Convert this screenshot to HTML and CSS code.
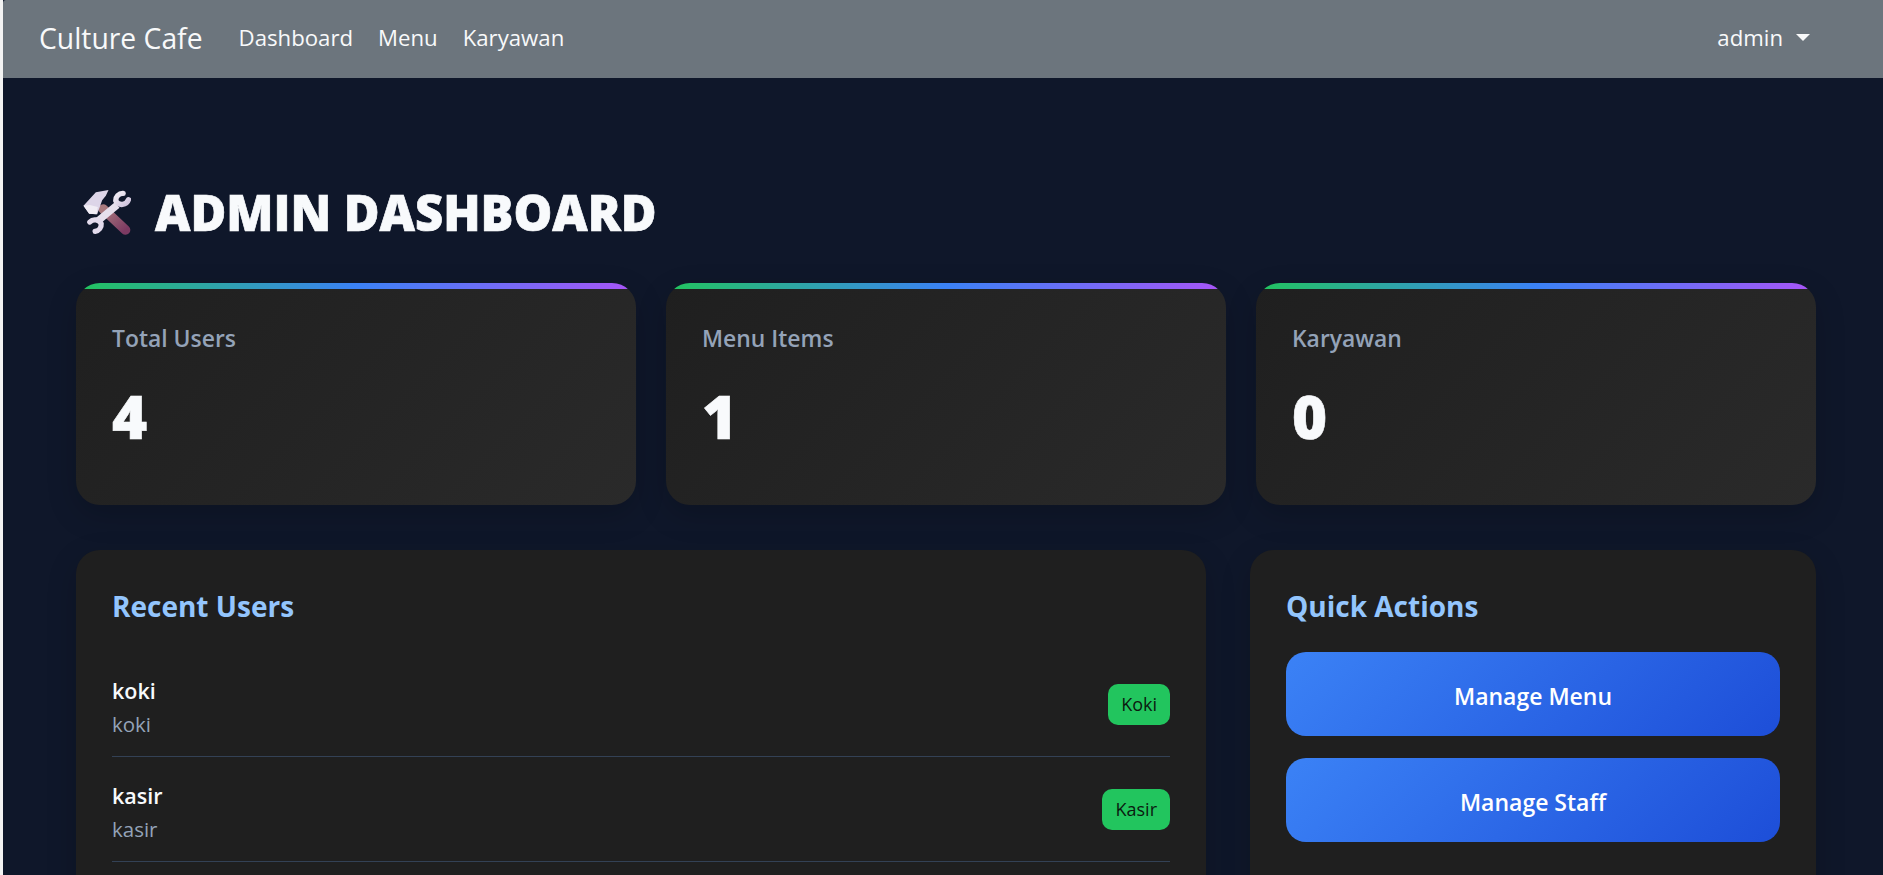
FILE: index.html
```html
<!DOCTYPE html>
<html lang="id">
<head>
<meta charset="utf-8">
<title>Culture Cafe</title>
<link rel="stylesheet" href="styles.css">
</head>
<body>
<nav class="navbar">
  <a class="brand">Culture Cafe</a>
  <a class="nav-link">Dashboard</a>
  <a class="nav-link">Menu</a>
  <a class="nav-link">Karyawan</a>
  <a class="nav-link user">admin <span class="caret"></span></a>
</nav>
<main class="page">
  <h1 class="title">
    <svg class="tools" viewBox="40 52 143 138" aria-hidden="true">
      <defs>
        <linearGradient id="handle" x1="0" y1="0" x2="1" y2="1"><stop offset="0" stop-color="#a97a7e"/><stop offset="1" stop-color="#7c3a62"/></linearGradient>
        <linearGradient id="steel" x1="0" y1="0" x2="1" y2="1"><stop offset="0" stop-color="#f2eef5"/><stop offset="1" stop-color="#cfc3dc"/></linearGradient>
      </defs>
      <line x1="100" y1="112" x2="167" y2="175" stroke="url(#handle)" stroke-width="29" stroke-linecap="round"/>
      <path d="M41 102 L78 62 L116 55 L108 72 L97 86 L82 128 L58 126 Z" fill="#ddd5e8"/>
      <path d="M41 102 L60 100 L84 106 L80 128 L58 126 Z" fill="#f1edf5"/>
      <line x1="84" y1="148" x2="142" y2="100" stroke="#e6e0ec" stroke-width="22"/>
      <path d="M160 65 A21 21 0 0 0 138 88 A21 21 0 0 0 176 84" fill="none" stroke="url(#steel)" stroke-width="16" stroke-linecap="round"/>
      <path d="M60 151 A21 21 0 0 1 94 156 A21 21 0 0 1 76 179" fill="none" stroke="#e3dbec" stroke-width="16" stroke-linecap="round"/>
    </svg>
    <span>ADMIN DASHBOARD</span>
  </h1>
  <section class="stats">
    <div class="stat"><div class="stat-label">Total Users</div><div class="stat-value">4</div></div>
    <div class="stat"><div class="stat-label">Menu Items</div><div class="stat-value">1</div></div>
    <div class="stat"><div class="stat-label">Karyawan</div><div class="stat-value">0</div></div>
  </section>
  <section class="columns">
    <div class="panel">
      <h2 class="panel-title">Recent Users</h2>
      <div class="user-row">
        <div class="user-text"><div class="user-name">koki</div><div class="user-sub">koki</div></div>
        <span class="badge">Koki</span>
      </div>
      <div class="user-row">
        <div class="user-text"><div class="user-name">kasir</div><div class="user-sub">kasir</div></div>
        <span class="badge">Kasir</span>
      </div>
    </div>
    <div class="panel">
      <h2 class="panel-title">Quick Actions</h2>
      <a class="action">Manage Menu</a>
      <a class="action">Manage Staff</a>
    </div>
  </section>
</main>
</body>
</html>
```
FILE: styles.css
```css
* { box-sizing: border-box; }
html { background: #f3f3f3; }
body {
  margin: 0 0 0 3px;
  height: 875px;
  overflow: hidden;
  background: #0f172a;
  color: #f8fafc;
  font-family: "Open Sans", "Noto Sans", sans-serif;
}
.navbar {
  display: flex;
  align-items: center;
  height: 78px;
  background: #6c757d;
  padding: 0 36px 3px;
  color: #fff;
  border-top-left-radius: 3px;
}
.brand { font-size: 28.3px; margin-right: 36px; color: #f8f9fa; }
.nav-link { font-size: 22.2px; margin-right: 25px; color: #f8f9fa; }
.nav-link.user { margin: 0 37px 0 auto; display: flex; align-items: center; gap: 13px; }
.caret { width: 0; height: 0; border-left: 7px solid transparent; border-right: 7px solid transparent; border-top: 7px solid #f8f9fa; }
.page { padding: 105px 67px 0 73px; }
.title { display: flex; align-items: center; gap: 24px; margin: 0 0 42px 7px; font-size: 48.8px; font-weight: 800; line-height: 58px; -webkit-text-stroke: 0.7px #f8fafc; }
.tools { width: 48px; height: 46px; flex: none; }
.stats { display: grid; grid-template-columns: repeat(3, 560px); gap: 30px; margin-bottom: 45px; }
.stat {
  height: 222px;
  border-radius: 24px;
  padding: 36px;
  background-color: #222;
  background-image: linear-gradient(90deg, #22c55e, #3b82f6, #a855f7), linear-gradient(135deg, #1f1f1f, #2a2a2a);
  background-size: 100% 6px, 100% 100%;
  background-repeat: no-repeat;
  box-shadow: 0 10px 30px rgba(0,0,0,.18);
}
.stat-label { font-size: 22.9px; font-weight: 600; color: #94a3b8; line-height: 30px; margin-top: 5px; }
.stat-value { font-size: 60px; font-weight: 800; line-height: 72px; margin-top: 26px; -webkit-text-stroke: 0.6px #f8fafc; }
.columns { display: grid; grid-template-columns: 1130px 566px; gap: 44px; }
.panel { background: #1f1f1f; border-radius: 24px; padding: 36px; height: 400px; box-shadow: 0 10px 30px rgba(0,0,0,.18); }
.panel-title { margin: 2px 0 28px; font-size: 28px; font-weight: 700; line-height: 36px; color: #93c5fd; }
.user-row { display: flex; justify-content: space-between; align-items: center; height: 105px; border-bottom: 1px solid #334155; }
.user-text { padding-top: 7px; }
.user-name { font-weight: 600; font-size: 21.5px; line-height: 34px; }
.user-sub { font-size: 20.5px; line-height: 33px; color: #94a3b8; }
.badge { background: #22c55e; color: #0b1a10; border-radius: 10px; padding: 0 13px; height: 41px; line-height: 41px; font-size: 18px; }
.action {
  display: flex; align-items: center; justify-content: center;
  height: 84px; margin-bottom: 22px; padding-top: 3px;
  border-radius: 20px;
  background: linear-gradient(135deg, #3b82f6, #1d4ed8);
  font-size: 23px; font-weight: 600; color: #fff;
}
```
